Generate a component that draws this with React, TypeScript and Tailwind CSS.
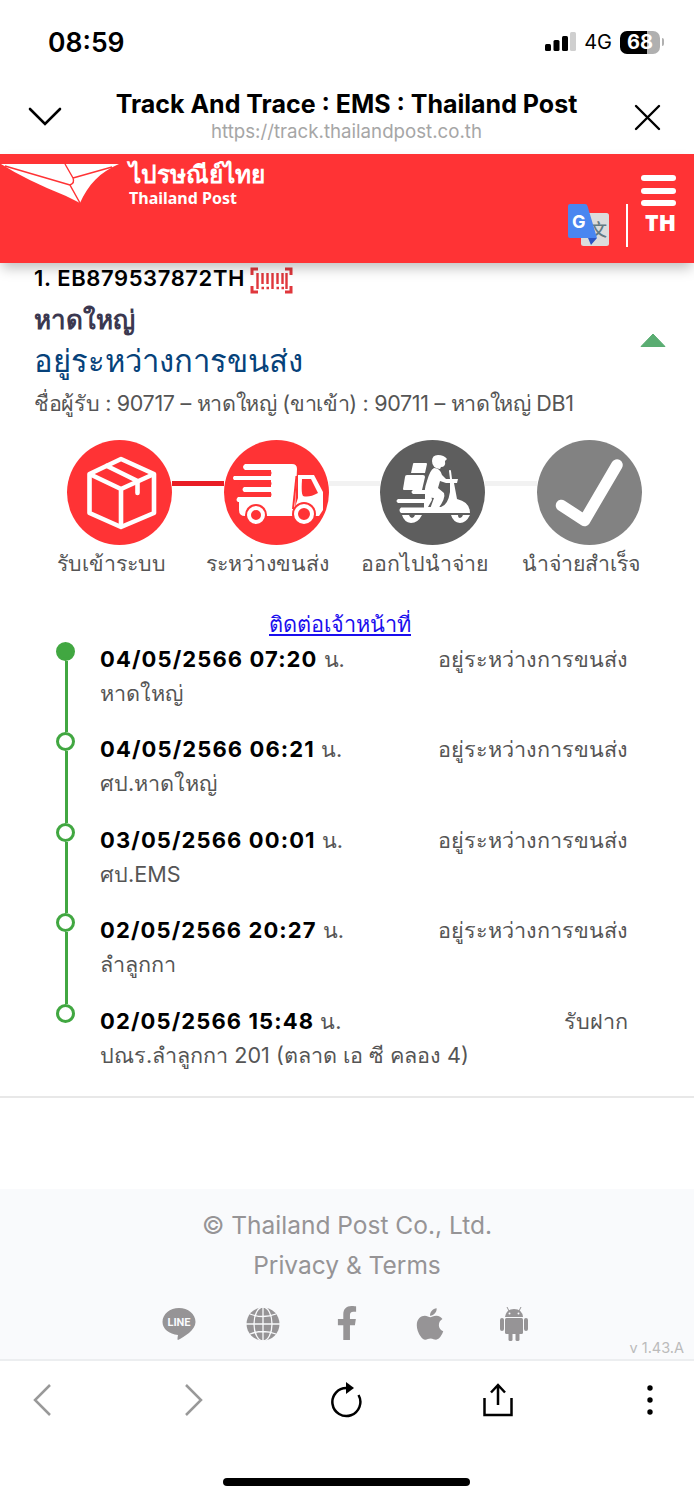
import { FaApple, FaFacebookF } from "react-icons/fa";

const events = [
  { time: "04/05/2566 07:20", place: "หาดใหญ่", status: "อยู่ระหว่างการขนส่ง" },
  { time: "04/05/2566 06:21", place: "ศป.หาดใหญ่", status: "อยู่ระหว่างการขนส่ง" },
  { time: "03/05/2566 00:01", place: "ศป.EMS", status: "อยู่ระหว่างการขนส่ง" },
  { time: "02/05/2566 20:27", place: "ลำลูกกา", status: "อยู่ระหว่างการขนส่ง" },
  { time: "02/05/2566 15:48", place: "ปณร.ลำลูกกา 201 (ตลาด เอ ซี คลอง 4)", status: "รับฝาก" },
];

const stepLabels = ["รับเข้าระบบ", "ระหว่างขนส่ง", "ออกไปนำจ่าย", "นำจ่ายสำเร็จ"];

function StatusBar() {
  return (
    <div className="flex h-[76px] items-start justify-between pl-12 pr-[30px] pt-[26px]">
      <span className="text-[26.5px] font-semibold leading-8">08:59</span>
      <div className="flex h-8 items-center">
        <svg width="31" height="20" viewBox="0 0 31 20">
          <rect x="0" y="12" width="6" height="7" rx="1.5" />
          <rect x="8.5" y="8" width="6" height="11" rx="1.5" />
          <rect x="17" y="4" width="6" height="15" rx="1.5" />
          <rect x="25" y="0" width="6" height="19" rx="1.5" fill="#cfcfcf" />
        </svg>
        <span className="ml-2 text-[20px] leading-8">4G</span>
        <div className="ml-2 flex h-[23px] w-10 items-center justify-center rounded-[7px] bg-[linear-gradient(90deg,#000_68%,#b0b0b0_68%)] text-[20px] font-bold text-white">
          68
        </div>
        <div className="ml-0.5 h-2 w-0.5 rounded-r bg-[#b0b0b0]" />
      </div>
    </div>
  );
}

function TitleBar() {
  return (
    <div className="flex h-[78px] items-start justify-between pl-7 pr-[33px]">
      <svg className="mt-[31px]" width="34" height="20" viewBox="0 0 34 20" fill="none" stroke="#000" strokeWidth="2.6">
        <path d="M2 2 17 17 32 2" strokeLinecap="round" />
      </svg>
      <div className="-ml-[3px] flex flex-col items-center">
        <h1 className="mt-3 whitespace-nowrap text-[25px] font-bold leading-8">Track And Trace : EMS : Thailand Post</h1>
        <span className="text-[18.7px] leading-6 text-[#a6a6a6]">https://track.thailandpost.co.th</span>
      </div>
      <svg className="mt-7" width="27" height="27" viewBox="0 0 27 27" fill="none" stroke="#000" strokeWidth="2.4">
        <path d="M2 2 25 25M25 2 2 25" strokeLinecap="round" />
      </svg>
    </div>
  );
}

function Header() {
  return (
    <header className="relative flex h-[109px] justify-between bg-[#ff3335] text-white shadow-[0_7px_12px_-2px_rgba(0,0,0,0.25)]">
      <div className="flex">
        <svg className="mt-[9px]" width="120" height="42" viewBox="0 0 120 42">
          <path d="M1 1H119C100 9 88 22 80 40L66 33Q26 17 1 1Z" fill="#fff" />
          <path d="M65 1 73 15Q75 20 70 22L80 40M73 15 112 4M70 22 5 3" fill="none" stroke="#ff3335" strokeWidth="1.4" />
        </svg>
        <div className="ml-[9px] mt-1 font-['Noto_Sans',sans-serif] font-bold">
          <div className="h-[31px] whitespace-nowrap text-[24.500px] leading-[31px]">ไปรษณีย์ไทย</div>
          <div className="whitespace-nowrap text-[16px] leading-[18px]">Thailand Post</div>
        </div>
      </div>
      <div className="flex">
        <svg className="mr-4 mt-[50px]" width="43" height="43" viewBox="0 0 43 43">
          <rect x="14" y="9" width="28" height="33" rx="2.5" fill="#dcdcdc" />
          <path d="M21 34H30L24 41Z" fill="#2c55c4" />
          <text x="23" y="32" fontSize="17" fontWeight="500" fill="#637a82" fontFamily="Noto Sans CJK SC">文</text>
          <path d="M3 0H18Q20 0 20.500 2L30 34H3Q1 34 1 32V2Q1 0 3 0Z" fill="#4a86f0" />
          <text x="5" y="24" fontSize="18" fontWeight="700" fill="#fff" fontFamily="Inter">G</text>
        </svg>
        <div className="mr-[13px] mt-[50px] h-[43px] w-0.5 bg-white" />
        <div className="mr-[18px] mt-[21px] flex w-[35px] flex-col items-center">
          <div className="flex w-full flex-col gap-[6.500px]">
            <div className="h-1.5 rounded-sm bg-white" />
            <div className="h-1.5 rounded-sm bg-white" />
            <div className="h-1.5 rounded-sm bg-white" />
          </div>
          <span className="mt-0.5 pl-1 font-['Open_Sans',sans-serif] text-[23px] font-extrabold leading-7">TH</span>
        </div>
      </div>
    </header>
  );
}

function BarcodeIcon() {
  return (
    <svg className="ml-[5px]" width="43" height="27" viewBox="0 0 43 27" fill="none" stroke="#e0373c" strokeWidth="3">
      <path d="M8 2H2V8M35 2H41V8M8 25H2V19M35 25H41V19" />
      <path d="M7.500 6V22M12.500 6V17M17.500 6V17M22.500 6V22M27.500 6V17M32.500 6V17M36.500 6V22" strokeWidth="2.400" />
      <path d="M11.500 21H14M16.500 21H19M26.500 21H29M31.500 21H34" strokeWidth="2.400" />
    </svg>
  );
}

function BoxStep() {
  return (
    <svg width="105" height="105" viewBox="0 0 105 105" fill="none" stroke="#fff" strokeWidth="4.6">
      <circle cx="52.500" cy="52.500" r="52.500" fill="#ff3335" stroke="none" />
      <path d="M54 19 87 34V73L54 87 22.500 73V34Z" strokeLinejoin="round" />
      <path d="M22.500 34 54 49 87 34M54 49V87" />
      <path d="M40 26 70.500 41V53" strokeLinecap="round" strokeLinejoin="round" />
    </svg>
  );
}

function TruckStep() {
  return (
    <svg width="105" height="105" viewBox="0 0 105 105">
      <circle cx="52.500" cy="52.500" r="52.500" fill="#ff3335" />
      <path d="M21 24H68Q73 24 73 29L71 70 68 76H21Q15 76 15 70V62H14Q11 60 14 57H47V52H20Q17 49.500 20 47H47V40H10Q8 38 10 36H47V30H21Q17 27 21 24Z" fill="#fff" />
      <path d="M18 33H45M18 43.500H45M18 54.500H45" stroke="#ff3335" strokeWidth="5" strokeLinecap="round" />
      <path d="M74 35H90L99 52V70L95 76H68L74 58Z" fill="#fff" />
      <path d="M78 39H87L94 53Q85 58 79 56Q77 54 78 39Z" fill="#ff3335" />
      <path d="M72.500 36 69 69" stroke="#ff3335" strokeWidth="2" />
      <circle cx="32" cy="75" r="11" fill="#ff3335" />
      <circle cx="32" cy="75" r="7" fill="none" stroke="#fff" strokeWidth="4" />
      <circle cx="80" cy="74" r="12" fill="#ff3335" />
      <circle cx="80" cy="74" r="8" fill="none" stroke="#fff" strokeWidth="4" />
    </svg>
  );
}

function ScooterStep() {
  return (
    <svg width="105" height="105" viewBox="0 0 105 105">
      <circle cx="52.500" cy="52.500" r="52.500" fill="#5e5e5e" />
      <g fill="#fff">
        <path d="M34 23H46Q47 23 47 24L45 33H31L33 24Q33 23 34 23Z" />
        <path d="M27 35H43Q45 35 45 37L42 50H24Q23 50 23 49L25 37Q25 35 27 35Z" />
        <path d="M52 21Q52 15 58 15 64 15 67 19L65 21Q66 27 61 27L60 29Q52 28 52 21Z" />
        <path d="M54 28Q60 28 62 35L66 39H77V43H66L60 41 58 48 64 53Q66 58 58 69H50L54 58 46 57Q43 52 47 41Q50 30 54 28Z" />
        <path d="M70 39H78L77 43H74L77 59Q90 62 90 73H21Q18 70 21 67.500H44V63H18Q15 61 18 59H45V54H33Q30 52 33 50H50L52 60 48 67H61Q68 65 70 52Z" />
        <path d="M22 75H42Q38 83 31 83 24 82 22 75ZM71 75H90Q86 83 80 83 73 82 71 75Z" />
      </g>
      <path d="M29 75H35Q34 78 32 78 30 78 29 75ZM78 75H83Q82 78 80 78 78 78 78 75Z" fill="#5e5e5e" />
      <path d="M70 31 71 39" stroke="#fff" strokeWidth="2" strokeLinecap="round" />
    </svg>
  );
}

function DoneStep() {
  return (
    <svg width="105" height="105" viewBox="0 0 105 105">
      <circle cx="52.500" cy="52.500" r="52.500" fill="#828282" />
      <path d="M24.500 65.500 47.500 80.500 80 25" fill="none" stroke="#fff" strokeWidth="11.500" strokeLinecap="round" strokeLinejoin="round" />
    </svg>
  );
}

function Steps() {
  return (
    <div>
      <div className="mt-[17px] flex pl-[67px] pr-[52px]">
        <BoxStep />
        <div className="mt-[41px] h-[5px] flex-1 bg-[#e91d25]" />
        <TruckStep />
        <div className="mt-[41px] h-[5px] flex-1 bg-[#f2f2f2]" />
        <ScooterStep />
        <div className="mt-[41px] h-[5px] flex-1 bg-[#f2f2f2]" />
        <DoneStep />
      </div>
      <div className="ml-[33px] grid w-[626px] grid-cols-4 text-center text-[21.300px] leading-9 text-[#555]">
        {stepLabels.map((label) => (
          <span key={label} className="whitespace-nowrap">{label}</span>
        ))}
      </div>
    </div>
  );
}

function Timeline() {
  return (
    <ul className="pl-[55px] pr-[66px]">
      {events.map((event, i) => (
        <li key={event.time} className="flex h-[90.4px]">
          <div className="flex w-5 flex-col items-center">
            <div className={`size-[19px] shrink-0 rounded-full border-[3.500px] border-[#41a741] ${i === 0 ? "bg-[#41a741]" : "bg-white"}`} />
            {i < events.length - 1 && <div className="ml-0.5 w-[3px] flex-1 bg-[#41a741]" />}
          </div>
          <div className="ml-[25px] flex-1 text-[21.600px] text-[#555]">
            <div className="flex h-[33px] justify-between whitespace-nowrap leading-[35px]">
              <span>
                <b className="text-[22px] font-bold tracking-[1.1px] text-black">{event.time}</b> น.
              </span>
              <span>{event.status}</span>
            </div>
            <div className="h-[34px] whitespace-nowrap leading-[36px]">{event.place}</div>
          </div>
        </li>
      ))}
    </ul>
  );
}

function Footer() {
  return (
    <footer className="relative h-[172px] border-b-2 border-[#eceef0] bg-[#f9fafc] pt-4 text-center text-[24.500px] leading-10 text-[#969496]">
      <div>© Thailand Post Co., Ltd.</div>
      <div>Privacy &amp; Terms</div>
      <div className="mt-[21px] flex justify-between pl-[162px] pr-[163px]">
        <svg width="34" height="36" viewBox="0 0 34 36" fill="currentColor">
          <path d="M17 2C26 2 33.500 8 33.500 16 33.500 24 22 31 16 34Q15 34 16 29C7 28 .5 23 .5 16 .5 8 8 2 17 2Z" />
          <text x="17" y="20" textAnchor="middle" fontSize="11" fontWeight="700" fill="#f9fafc" fontFamily="Roboto">LINE</text>
        </svg>
        <svg width="34" height="36" viewBox="0 0 34 36">
          <circle cx="17" cy="18" r="16.500" fill="currentColor" />
          <g fill="none" stroke="#f9fafc" strokeWidth="1.300">
            <path d="M0 18H34M17 1V35M4 8Q17 13 30 8M4 28Q17 23 30 28" />
            <ellipse cx="17" cy="18" rx="9" ry="17" />
          </g>
        </svg>
        <FaFacebookF className="h-[34px] w-[34px]" />
        <FaApple className="h-9 w-[34px]" />
        <svg width="34" height="36" viewBox="0 0 34 36" fill="currentColor">
          <path d="M8 11Q9 3 17 3T26 11Z" />
          <path d="M10 1 12 5M24 1 22 5" stroke="currentColor" />
          <rect x="8" y="12" width="18" height="16" rx="1.500" />
          <rect x="3" y="12" width="4" height="13" rx="2" />
          <rect x="27" y="12" width="4" height="13" rx="2" />
          <rect x="11.500" y="26" width="4" height="9" rx="1.500" />
          <rect x="18.500" y="26" width="4" height="9" rx="1.500" />
          <circle cx="12.500" cy="7.500" r="1" fill="#f9fafc" />
          <circle cx="21.500" cy="7.500" r="1" fill="#f9fafc" />
        </svg>
      </div>
      <span className="absolute bottom-[3px] right-2.5 text-[14.500px] leading-4 text-[#bbb]">v 1.43.A</span>
    </footer>
  );
}

function BottomBar() {
  return (
    <div className="h-[139px]">
      <div className="-ml-[34px] grid h-[78px] w-[760px] grid-cols-5 place-items-center">
        <svg width="20" height="34" viewBox="0 0 20 34" fill="none" stroke="#999" strokeWidth="2.500">
          <path d="M18 2 3 17 18 32" />
        </svg>
        <svg width="20" height="34" viewBox="0 0 20 34" fill="none" stroke="#999" strokeWidth="2.500">
          <path d="M2 2 17 17 2 32" />
        </svg>
        <svg width="32" height="36" viewBox="0 0 32 36" fill="none" stroke="#000" strokeWidth="2.500">
          <path d="M17 6A14 14 0 1 0 28.500 13" />
          <path d="M16 0V12L24 6Z" fill="#000" stroke="none" />
        </svg>
        <svg width="30" height="34" viewBox="0 0 30 34" fill="none" stroke="#000" strokeWidth="2.500">
          <path d="M1.500 15V32H28.500V15M15 22V2M8 9.500 15 2 22 9.500" />
        </svg>
        <svg width="6" height="30" viewBox="0 0 6 30">
          <circle cx="3" cy="3" r="2.700" />
          <circle cx="3" cy="15" r="2.700" />
          <circle cx="3" cy="27" r="2.700" />
        </svg>
      </div>
      <div className="ml-[223px] mt-[39px] h-2 w-[247px] rounded-full bg-black" />
    </div>
  );
}

export default function App() {
  return (
    <div className="h-[1500px] w-[694px] overflow-hidden bg-white font-[Inter,'Noto_Sans',sans-serif] text-black">
      <StatusBar />
      <TitleBar />
      <Header />
      <main className="h-[834.5px] border-b-2 border-[#e8e8e8]">
        <div className="flex items-center justify-between pl-[34px] pr-7">
          <div className="whitespace-nowrap">
            <div className="flex h-[34px] items-center text-[22px] font-semibold tracking-[0.6px]">
              <span className="-mt-[3px]">1. EB879537872TH</span>
              <BarcodeIcon />
            </div>
            <div className="h-[42px] text-[26px] font-semibold leading-[46px] text-[#3b3850]">หาดใหญ่</div>
            <div className="h-[42px] text-[31px] leading-[44px] text-[#06427a]">อยู่ระหว่างการขนส่ง</div>
            <div className="h-[42px] text-[21.500px] leading-[44px] tracking-[-0.32px] text-[#555]">
              ชื่อผู้รับ : 90717 – หาดใหญ่ (ขาเข้า) : 90711 – หาดใหญ่ DB1
            </div>
          </div>
          <svg className="mb-1.5" width="26" height="15" viewBox="0 0 26 15">
            <path d="M1 13.500 13 1 25 13.500Z" fill="#5aad72" stroke="#5aad72" strokeLinejoin="round" />
          </svg>
        </div>
        <Steps />
        <div className="mt-[25px] flex h-9 justify-center pr-3.5 text-[21.700px] leading-9 text-[#1a0dee] underline">
          <a href="#">ติดต่อเจ้าหน้าที่</a>
        </div>
        <Timeline />
      </main>
      <div className="h-[91.5px]" />
      <Footer />
      <BottomBar />
    </div>
  );
}
